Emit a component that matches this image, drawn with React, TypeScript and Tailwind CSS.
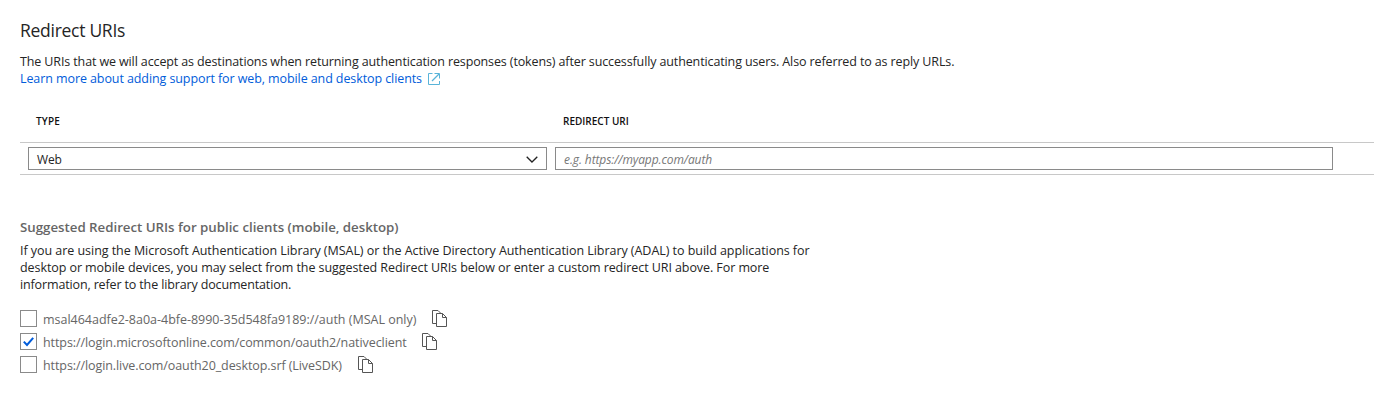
import { useState } from "react";

function CopyIcon() {
  return (
    <svg width="15" height="17" viewBox="0 0 15 17" fill="none" stroke="#555" className="shrink-0">
      <path d="M4 13.5H0.5V0.5H6L8.5 3" />
      <path d="M4.5 3.5H10.5L14.5 7.5V16.5H4.5Z" />
      <path d="M10.5 3.5V7.5H14.5" />
    </svg>
  );
}

function ExternalIcon() {
  return (
    <svg width="12" height="12" viewBox="0 0 12 12" fill="none" stroke="#59b4d9" className="ml-[6px] shrink-0">
      <path d="M4.5 0.5H0.5V11.5H11.5V8" />
      <path d="M6.5 0.5H11.5V5.5" />
      <path d="M4 8L11 1" strokeWidth="1.2" />
    </svg>
  );
}

const uris = [
  {
    text: "msal464adfe2-8a0a-4bfe-8990-35d548fa9189://auth (MSAL only)",
    fit: "w-[389px] tracking-[-0.015px]",
    checked: false,
  },
  {
    text: "https://login.microsoftonline.com/common/oauth2/nativeclient",
    fit: "w-[379px] tracking-[-0.075px]",
    checked: true,
  },
  {
    text: "https://login.live.com/oauth20_desktop.srf (LiveSDK)",
    fit: "w-[315px] tracking-[-0.085px]",
    checked: false,
  },
];

function UriRow({ text, fit, checked }: { text: string; fit: string; checked: boolean }) {
  const [on, setOn] = useState(checked);
  return (
    <div className="flex h-[23px] items-start">
      <button
        role="checkbox"
        aria-checked={on}
        aria-label={text}
        onClick={() => setOn(!on)}
        className="flex size-[17px] shrink-0 items-center justify-center border border-[#8a8a8a] bg-white"
      >
        {on && (
          <svg width="11" height="10" viewBox="0 0 11 10" fill="none" stroke="#015cda" strokeWidth="2">
            <path d="M0.8 4.6L4 8L10.2 0.8" />
          </svg>
        )}
      </button>
      <span className={`ml-[6px] shrink-0 whitespace-nowrap leading-[20px] text-[#666] ${fit}`}>{text}</span>
      <CopyIcon />
    </div>
  );
}

export default function App() {
  return (
    <main className="h-[412px] w-full overflow-hidden bg-white pl-5 pt-[18px] font-['Open_Sans',sans-serif] text-[12.5px] leading-[17px] text-[#252525]">
      <h1 className="h-[35px] text-[17.5px] leading-6 tracking-[-0.28px]">Redirect URIs</h1>
      <p className="whitespace-nowrap tracking-[-0.12px]">
        The URIs that we will accept as destinations when returning authentication responses (tokens) after successfully authenticating users. Also referred to as reply URLs.
      </p>
      <a href="#" className="flex h-[17px] items-center text-[#015cda]">
        <span className="whitespace-nowrap tracking-[-0.09px]">Learn more about adding support for web, mobile and desktop clients</span>
        <ExternalIcon />
      </a>

      <section className="mt-[14px]">
        <div className="flex h-[41px] items-center pl-4 text-[10px] font-semibold text-[#111]">
          <span className="w-[527px] tracking-[0.2px]">TYPE</span>
          <span>REDIRECT URI</span>
        </div>
        <div className="flex h-[33px] items-center gap-2 border-y border-[#c8c8c8] pl-2">
          <button className="flex h-[23px] w-[519px] items-center justify-between border border-[#8a8a8a] px-2">
            <span className="pt-px text-[12px] tracking-[-0.2px]">Web</span>
            <svg width="12" height="7" viewBox="0 0 12 7" fill="none" stroke="#222" strokeWidth="1.3" className="mt-px">
              <path d="M0.7 0.7L6 6L11.3 0.7" />
            </svg>
          </button>
          <input
            placeholder="e.g. https://myapp.com/auth"
            className="h-[23px] w-[778px] border border-[#8a8a8a] px-2 pt-px text-[12px] tracking-[-0.1px] outline-none placeholder:italic placeholder:text-[#777]"
          />
        </div>
      </section>

      <section className="mt-[43px]">
        <h2 className="mb-[6px] text-[13.3px] font-semibold leading-[18px] tracking-[-0.02px] text-[#666]">
          Suggested Redirect URIs for public clients (mobile, desktop)
        </h2>
        <p className="whitespace-nowrap">
          <span className="tracking-[-0.043px]">If you are using the Microsoft Authentication Library (MSAL) or the Active Directory Authentication Library (ADAL) to build applications for</span>
          <br />
          <span className="tracking-[-0.075px]">desktop or mobile devices, you may select from the suggested Redirect URIs below or enter a custom redirect URI above. For more</span>
          <br />
          <span className="tracking-[-0.14px]">information, refer to the library documentation.</span>
        </p>
        <div className="mt-[17px]">
          {uris.map((u) => (
            <UriRow key={u.text} {...u} />
          ))}
        </div>
      </section>
    </main>
  );
}
